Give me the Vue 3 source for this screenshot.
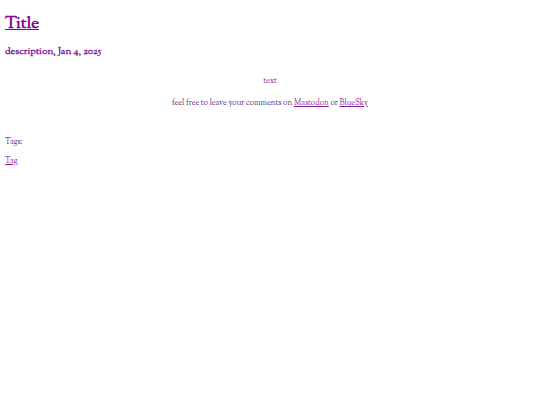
<script setup>
const tags = [{ name: 'Tag', href: '#tag' }]
</script>

<template>
  <main class="page">
    <h1 class="title"><a href="#title">Title</a></h1>
    <h2 class="meta">description, Jan 4, 2025</h2>
    <section class="content">
      <p class="body">text</p>
      <p class="feedback">
        feel free to leave your comments on
        <a href="#mastodon">Mastodon</a> or <a href="#bluesky">BlueSky</a>
      </p>
    </section>
    <section class="tags">
      <p>Tags:</p>
      <p v-for="tag in tags" :key="tag.name"><a :href="tag.href">{{ tag.name }}</a></p>
    </section>
  </main>
</template>

<style>
body {
  margin: 0;
  background: #fff;
}
</style>

<style scoped>
.page {
  padding: 13px 5px;
  font-family: "Sorts Mill Goudy", "Goudy Old Style", "Liberation Serif", serif;
  font-size: 8px;
  line-height: 12px;
  color: #53257f;
}
a {
  color: #8e1a98;
}
h1, h2, p {
  margin: 0;
}
.title {
  font-size: 17px;
  line-height: 22px;
}
.title a {
  color: #88088f;
}
.meta {
  margin-top: 10px;
  font-size: 10px;
  line-height: 14px;
  color: #7a149c;
}
.content {
  display: flex;
  flex-direction: column;
  gap: 10px;
  margin-top: 16px;
  text-align: center;
}
.body {
  color: #7420a4;
}
.tags {
  display: flex;
  flex-direction: column;
  gap: 7px;
  margin-top: 27px;
}
</style>
